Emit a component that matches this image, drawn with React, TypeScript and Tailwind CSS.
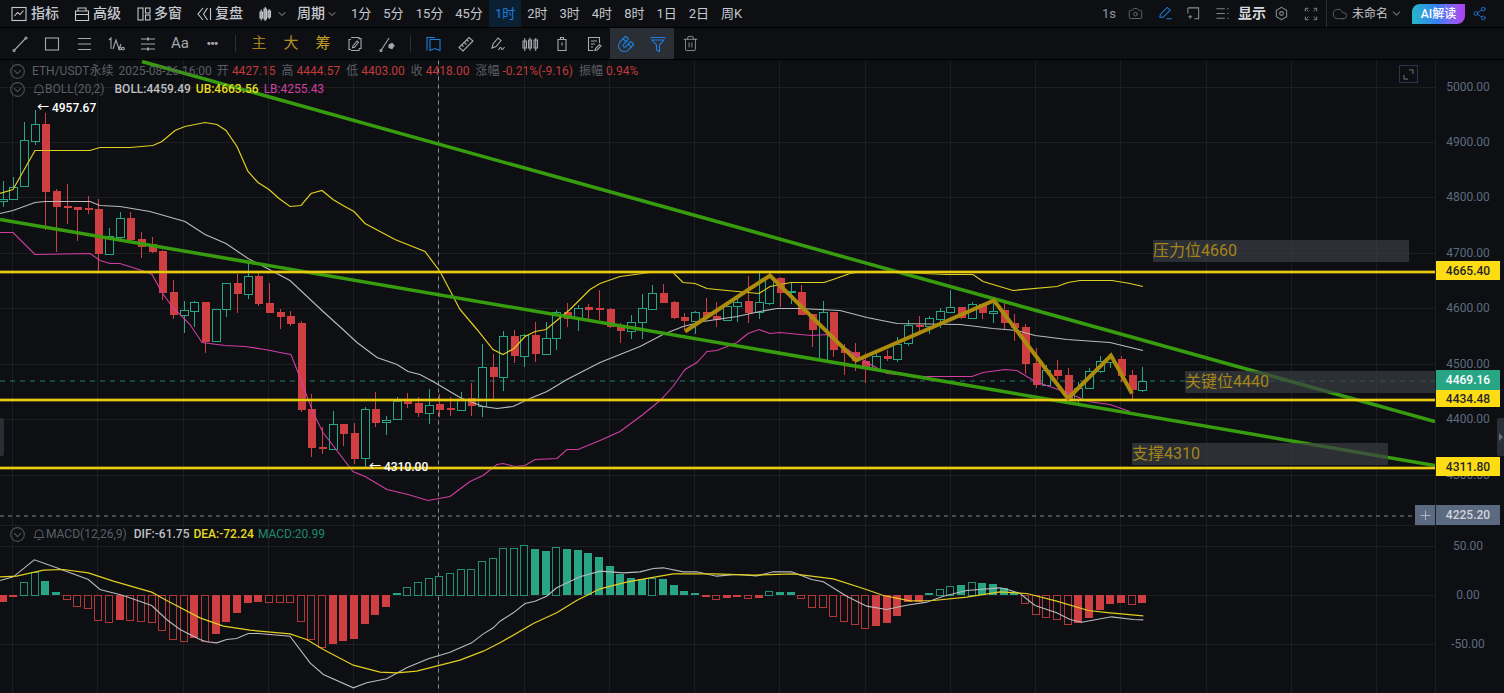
import React from 'react';
import { Camera, ChevronDown, Magnet, Share2, Trash2, Cloud, Plus } from 'lucide-react';

const BG = '#0d0f12';
const GREEN = '#27a585';
const RED = '#cf3e41';

// [high, bodyTop, bodyBottom, low, up]
const candles: [number, number, number, number, 0 | 1][] = [
  [181, 199, 201, 207, 1], [177, 187, 199, 200, 1], [122, 140, 186, 186, 1], [110, 124, 141, 145, 1],
  [113, 124, 192, 230, 0], [189, 191, 207, 252, 0], [184, 206, 208, 224, 0], [207, 207, 210, 241, 0],
  [196, 208, 210, 214, 0], [199, 209, 254, 272, 0], [228, 236, 254, 254, 1], [212, 218, 237, 239, 1],
  [212, 218, 240, 240, 0], [232, 239, 247, 258, 0], [237, 244, 252, 253, 0], [250, 251, 293, 300, 0],
  [280, 292, 315, 319, 0], [301, 310, 315, 333, 1], [301, 302, 311, 327, 1], [302, 302, 342, 353, 0],
  [309, 309, 341, 341, 1], [283, 283, 309, 317, 1], [274, 283, 294, 313, 0], [263, 276, 294, 299, 1],
  [271, 276, 304, 306, 0], [283, 303, 313, 313, 0], [309, 312, 317, 329, 0], [311, 316, 324, 326, 0],
  [321, 323, 410, 412, 0], [394, 409, 448, 457, 0], [427, 447, 449, 454, 0], [411, 424, 449, 449, 1],
  [424, 424, 434, 446, 0], [423, 433, 459, 464, 0], [407, 409, 458, 468, 1], [392, 409, 423, 427, 0],
  [416, 420, 422, 435, 1], [397, 401, 419, 419, 1], [393, 401, 404, 408, 0], [397, 403, 413, 417, 0],
  [389, 405, 413, 424, 1], [394, 404, 410, 417, 0], [397, 408, 410, 416, 0], [392, 399, 410, 410, 1],
  [383, 398, 406, 416, 0], [344, 367, 406, 417, 1], [354, 367, 377, 400, 0], [331, 336, 377, 391, 1],
  [330, 336, 356, 363, 0], [334, 335, 356, 367, 1], [322, 335, 354, 362, 0], [322, 338, 354, 354, 1],
  [310, 312, 338, 350, 1], [303, 312, 319, 327, 0], [305, 308, 318, 331, 1], [304, 307, 310, 320, 0],
  [290, 308, 310, 320, 0], [308, 309, 327, 328, 0], [323, 327, 331, 343, 0], [315, 322, 331, 339, 1],
  [294, 308, 322, 339, 1], [285, 293, 309, 310, 1], [284, 293, 303, 303, 0], [301, 302, 318, 319, 0],
  [313, 317, 321, 330, 0], [311, 312, 321, 334, 1], [298, 312, 317, 317, 0], [302, 316, 320, 327, 0],
  [306, 306, 320, 320, 1], [298, 302, 306, 322, 1], [276, 301, 313, 323, 0], [273, 302, 312, 319, 1],
  [273, 277, 303, 305, 1], [277, 278, 293, 307, 0], [283, 291, 292, 304, 1], [285, 292, 315, 315, 0],
  [314, 314, 330, 347, 0], [301, 312, 360, 360, 1], [312, 312, 350, 357, 0], [344, 349, 353, 375, 0],
  [343, 352, 361, 371, 0], [353, 361, 367, 383, 0], [353, 356, 369, 369, 1], [350, 356, 359, 361, 0],
  [337, 344, 359, 362, 1], [320, 325, 343, 346, 1], [316, 325, 327, 333, 0], [316, 318, 326, 334, 1],
  [308, 311, 319, 328, 1], [290, 307, 312, 312, 1], [307, 307, 318, 319, 0], [302, 304, 318, 319, 1],
  [304, 304, 313, 319, 0], [300, 311, 313, 323, 1], [303, 310, 323, 330, 0], [314, 323, 328, 341, 0],
  [324, 327, 364, 374, 0], [348, 363, 385, 388, 0], [365, 370, 385, 385, 1], [360, 370, 376, 380, 0],
  [368, 375, 399, 402, 0], [382, 388, 399, 403, 1], [368, 371, 388, 389, 1], [356, 361, 371, 373, 1],
  [356, 358, 362, 368, 1], [356, 359, 376, 382, 0], [370, 375, 390, 400, 0], [367, 381, 390, 392, 1],
];

// [height in px, hollow]; positive is up, negative is down
const macdBars: [number, 0 | 1][] = [
  [-7, 0], [-2, 0], [13, 1], [23, 1], [14, 0], [3, 0], [-4, 1], [-11, 1], [-13, 1], [-25, 1], [-27, 1], [-25, 0],
  [-25, 1], [-26, 1], [-27, 1], [-35, 1], [-44, 1], [-46, 1], [-43, 0], [-46, 1], [-39, 0], [-27, 0], [-18, 0], [-8, 0],
  [-7, 0], [-7, 1], [-7, 1], [-7, 1], [-26, 1], [-44, 1], [-52, 1], [-49, 0], [-46, 0], [-44, 0], [-29, 0], [-20, 0],
  [-12, 0], [2, 0], [8, 1], [13, 1], [17, 1], [19, 1], [22, 1], [26, 1], [26, 1], [34, 1], [37, 1], [47, 1],
  [47, 1], [50, 1], [46, 0], [44, 0], [48, 1], [46, 0], [45, 0], [42, 0], [38, 0], [29, 0], [21, 0], [17, 0],
  [16, 0], [17, 1], [16, 0], [10, 0], [4, 0], [2, 0], [-2, 0], [-4, 1], [-3, 0], [-2, 0], [-3, 1], [-3, 0],
  [4, 1], [3, 0], [3, 0], [-3, 1], [-12, 1], [-12, 1], [-21, 1], [-26, 1], [-29, 1], [-33, 1], [-31, 0], [-28, 0],
  [-21, 0], [-7, 0], [-7, 0], [2, 0], [6, 1], [9, 1], [10, 0], [13, 1], [12, 0], [11, 0], [7, 0], [2, 0],
  [-8, 1], [-19, 1], [-22, 1], [-24, 1], [-29, 1], [-28, 0], [-23, 0], [-15, 0], [-9, 0], [-8, 0], [-9, 1], [-8, 0],
];

const ub = '0,194 13,190 35,151 45,151 90,151 100,148 130,148 153,146 162,142 175,131 185,127 205,123 217,125 226,131 237,147 248,172 258,183 269,190 279,199 290,207 301,206 311,194 322,191 333,200 343,206 354,212 365,224 380,232 395,240 425,252 440,272 460,310 477,330 493,350 503,355 514,349 525,337 535,332 546,330 570,310 590,290 600,284 620,277 650,273 672,272 683,283 695,284 707,289 727,291 748,293 759,294 770,287 791,283 813,283 824,283 833,280 850,274 863,272 880,272 947,275 973,275 983,282 1013,291 1057,287 1068,283 1080,281 1112,281 1130,284 1143,287';
const mid = '0,214 13,211 35,203 45,202 90,202 100,206 120,207 150,212 185,222 205,235 226,244 248,259 258,264 290,281 322,311 343,330 357,343 377,358 397,365 408,372 420,375 433,382 460,398 483,407 497,409 513,407 530,399 547,392 567,380 600,363 640,347 663,335 683,327 703,322 737,317 760,312 777,309 800,309 840,311 867,318 897,324 960,325 993,329 1017,331 1035,336 1067,340 1110,343 1143,351';
const lb = '0,233 13,233 35,255 90,254 100,261 110,264 120,264 145,272 152,275 162,293 172,307 190,325 202,343 225,346 245,347 265,350 280,353 291,355 300,378 313,413 323,433 353,472 365,477 387,490 408,495 428,501 450,497 470,482 483,476 497,465 503,464 515,467 525,466 535,460 557,459 567,450 578,450 600,441 620,432 643,415 660,401 673,387 685,370 697,363 707,352 717,351 737,343 748,334 759,330 770,334 780,333 800,335 812,336 827,335 840,345 867,363 887,374 923,377 972,377 983,373 1005,370 1017,371 1035,382 1067,393 1088,402 1110,405 1130,412';

const toPoints = (offset: number, pts: number[][]) => pts.map(([x, y]) => `${offset + x / 3},${520 + y / 3}`).join(' ');

const dif = [
  toPoints(0, [[0, 183], [40, 172], [103, 121], [170, 145], [265, 180], [300, 210], [370, 228], [455, 258], [500, 300], [540, 330], [600, 360], [620, 367], [650, 370], [680, 360], [710, 357], [745, 342], [775, 342], [870, 350], [930, 430], [970, 465], [1060, 505], [1100, 490], [1160, 478], [1220, 445], [1285, 418], [1350, 398], [1415, 370], [1450, 343], [1480, 325]]),
  toPoints(500, [[0, 305], [40, 280], [75, 252], [105, 245], [140, 230], [170, 205], [240, 172], [300, 155], [370, 160], [420, 157], [460, 147], [490, 145], [550, 157], [590, 157], [650, 170], [710, 165], [770, 169], [820, 157], [875, 157], [935, 180], [970, 187], [1040, 230], [1100, 260], [1160, 270], [1220, 257], [1280, 248], [1330, 230], [1400, 213]]),
  toPoints(1000, [[0, 205], [30, 212], [60, 222], [105, 258], [170, 280], [210, 300], [245, 308], [335, 292], [400, 300], [430, 301]]),
].join(' ');
const dea = [
  toPoints(0, [[0, 172], [50, 170], [130, 152], [190, 150], [265, 160], [340, 185], [455, 218], [500, 243], [600, 295], [670, 320], [750, 332], [870, 343], [920, 360], [970, 390], [1060, 437], [1140, 458], [1190, 460], [1250, 455], [1380, 422], [1450, 395]]),
  toPoints(500, [[0, 370], [100, 312], [170, 280], [230, 243], [300, 208], [380, 188], [450, 175], [520, 163], [640, 163], [760, 167], [880, 163], [1000, 178], [1090, 207], [1150, 228], [1230, 244], [1300, 243], [1400, 233]]),
  toPoints(1000, [[0, 217], [80, 222], [170, 245], [265, 273], [330, 280], [430, 289]]),
].join(' ');

const gridX = [12.5, 97.5, 183.5, 268.5, 353.5, 438.5, 524.5, 609.5, 694.5, 779.5, 865.5, 950.5, 1035.5, 1120.5, 1206.5, 1291.5, 1376.5];
const gridY = [87.5, 142.5, 197.5, 253.5, 308.5, 364.5, 419.5, 475.5, 525.5, 546.5, 595.5, 644.5];

const axisLabels: [string, number][] = [
  ['5000.00', 87], ['4900.00', 142], ['4800.00', 197], ['4700.00', 253], ['4600.00', 308], ['4500.00', 364],
  ['4400.00', 419], ['4300.00', 475], ['50.00', 546], ['0.00', 595], ['-50.00', 644],
];

const centerX = (i: number) => 2.6 + i * 10.65;

const Chart = () => (
  <svg className="absolute inset-0 h-full w-full" viewBox="0 61 1435 632" fill="none">
    <g stroke="#1c1e22" shapeRendering="crispEdges">
      {gridX.map((x) => <line key={x} x1={x} x2={x} y1={61} y2={693} />)}
      {gridY.map((y) => <line key={y} x1={0} x2={1435} y1={y} y2={y} />)}
    </g>

    <line x1={0} x2={1435} y1={381.5} y2={381.5} stroke={GREEN} strokeOpacity={0.75} strokeDasharray="5 5" />
    <line x1={438.5} x2={438.5} y1={61} y2={693} stroke="#8a8d92" strokeDasharray="4 4" />
    <line x1={0} x2={1415} y1={516.5} y2={516.5} stroke="#8a8d92" strokeDasharray="4 4" />

    {candles.map(([high, top, bottom, low, up], i) => {
      const cx = Math.round(centerX(i));
      const color = up ? GREEN : RED;
      return (
        <g key={i} shapeRendering="crispEdges">
          <line x1={cx + 0.5} x2={cx + 0.5} y1={high} y2={low} stroke={color} />
          {up ? (
            <rect x={cx - 3.5} y={top + 0.5} width={8} height={bottom - top} fill={BG} stroke={color} />
          ) : (
            <rect x={cx - 3.5} y={top} width={8} height={bottom - top} fill={color} />
          )}
        </g>
      );
    })}

    {macdBars.map(([h, hollow], i) => {
      const x = Math.round(centerX(i)) - 3.5;
      const color = h > 0 ? GREEN : RED;
      const y = h > 0 ? 595 - h : 595;
      return hollow ? (
        <rect key={i} x={x} y={y + 0.5} width={7} height={Math.abs(h)} fill={BG} stroke={color} strokeOpacity={0.85} shapeRendering="crispEdges" />
      ) : (
        <rect key={i} x={x - 0.5} y={y} width={8} height={Math.abs(h)} fill={color} shapeRendering="crispEdges" />
      );
    })}

    <polyline points={ub} stroke="#e3cf1f" strokeWidth={1.2} />
    <polyline points={mid} stroke="#b9bbbe" strokeWidth={1.1} />
    <polyline points={lb} stroke="#d13fa5" strokeWidth={1.1} />
    <polyline points={dif} stroke="#b9bbbe" strokeWidth={1.1} />
    <polyline points={dea} stroke="#e3cf1f" strokeWidth={1.2} />

    <line x1={142} y1={62} x2={1435} y2={422} stroke="#389c0f" strokeWidth={3.5} />
    <line x1={0} y1={220} x2={1435} y2={466} stroke="#389c0f" strokeWidth={3.5} />

    <g stroke="#a8900f" strokeWidth={3}>
      {[272.5, 400.5, 468.5].map((y) => <line key={y} x1={0} x2={1435} y1={y} y2={y} />)}
    </g>
    <g stroke="#ffdf14" strokeWidth={1.6}>
      {[272.5, 400.5, 468.5].map((y) => <line key={y} x1={0} x2={1435} y1={y} y2={y} />)}
    </g>

    <polyline points="685,332 770,276 856,361 994,301 1068,399 1111,356 1132,394" stroke="#ad8b0c" strokeWidth={4} strokeLinejoin="miter" />
  </svg>
);

const Glyph = ({ children, className = 'text-[#a5a9b0]' }: { children: React.ReactNode; className?: string }) => (
  <svg viewBox="0 0 18 18" fill="none" stroke="currentColor" strokeWidth={1.1} className={`h-[18px] w-[18px] ${className}`}>
    {children}
  </svg>
);

const drawTools: React.ReactNode[] = [
  <Glyph key="line"><path d="M3.5 15 14.5 3.5" /><circle cx="3" cy="15.5" r="1" /><circle cx="15" cy="3" r="1" /></Glyph>,
  <Glyph key="rect"><rect x="2.5" y="3" width="13" height="12" /></Glyph>,
  <Glyph key="lines"><path d="M3 3.5h13M3 9h13M3 14.5h13M16 3.5v0" /></Glyph>,
  <Glyph key="fib"><path d="M2 5 4 3v11M6 14l3-9 3 9 2-5" /><circle cx="13" cy="13.5" r="1.3" /><circle cx="16" cy="13.5" r="1.3" /></Glyph>,
  <Glyph key="channel"><path d="M2 4h14M2 9h14M2 14h14" /><path d="M9 2.5v3M9 12.5v3" strokeWidth={1.8} /></Glyph>,
];

const Sep = () => <span className="mx-[7px] h-[17px] w-px bg-[#2c2f35]" />;

const ToolCell = ({ children, active }: { children: React.ReactNode; active?: boolean }) => (
  <div className={`flex h-[32px] w-[32px] items-center justify-center ${active ? 'bg-[#2a2e35]' : ''}`}>{children}</div>
);

const tabs = ['1分', '5分', '15分', '45分', '1时', '2时', '3时', '4时', '8时', '1日', '2日', '周K'];

const TopBar = () => (
  <div className="flex h-[27px] items-center justify-between text-[#c5c8ce]">
    <div className="flex items-center pl-[10px]">
      <div className="flex items-center gap-[3px] text-[14px] font-medium">
        <Glyph className="text-[#c5c8ce]"><rect x="2" y="2.5" width="14" height="13" /><path d="m4.5 11 3-3.5 2.500 2 3.500-4" /></Glyph>
        <span>指标</span>
      </div>
      <div className="ml-[14px] flex items-center gap-[2px] text-[14px] font-medium">
        <Glyph className="text-[#c5c8ce]"><path d="M5 6V3h8v3M2.5 6h13v9.500h-13zM2.5 9.500h13" /></Glyph>
        <span>高级</span>
      </div>
      <div className="ml-[14px] flex items-center gap-[1px] text-[14px] font-medium">
        <Glyph className="text-[#c5c8ce]"><rect x="3" y="3" width="5" height="12" /><rect x="10.5" y="3" width="4.5" height="5" /><rect x="10.5" y="10" width="4.5" height="5" /></Glyph>
        <span>多窗</span>
      </div>
      <div className="ml-[13px] flex items-center gap-[2px] text-[14px] font-medium">
        <Glyph className="text-[#c5c8ce]"><path d="M8 3 3 9l5 6M12.500 3l-4 6 4 6M15.500 3v12" /></Glyph>
        <span>复盘</span>
      </div>
      <div className="ml-[13px] flex items-center gap-[2px]">
        <Glyph className="text-[#c5c8ce]"><path d="M4 7h2.500v6H4zM8 4h2.500v10H8zM12 6h2.500v6H12zM5.200 4.500V15.500M9.200 2v14M13.200 4v10" /></Glyph>
        <ChevronDown className="h-[12px] w-[12px] text-[#9ba0a8]" />
      </div>
      <div className="ml-[9px] flex items-center gap-[1px] text-[14px] font-medium">
        <span>周期</span>
        <ChevronDown className="h-[12px] w-[12px] text-[#9ba0a8]" />
      </div>
      <div className="ml-[7px] flex items-center text-[13px]">
        {tabs.map((t) => (
          <span key={t} className={`flex h-[27px] items-center px-[6px] ${t === '1时' ? 'bg-[#0b2133] text-[#1e7fe0]' : ''}`}>{t}</span>
        ))}
      </div>
    </div>

    <div className="flex items-center">
      <span className="mr-[12px] text-[13px] text-[#8f97a5]">1s</span>
      <Camera className="mr-[15px] h-[15px] w-[15px] text-[#6b6f76]" strokeWidth={1.4} />
      <svg viewBox="0 0 16 16" fill="none" stroke="#1e7fe0" strokeWidth={1.1} className="mr-[13px] h-[15px] w-[15px]">
        <path d="m2 12 .5-3L10 1.500 13 4.500 5.500 12zM9 13.500h5.500" />
      </svg>
      <svg viewBox="0 0 16 16" fill="none" stroke="#8a8d92" strokeWidth={1.1} className="mr-[14px] h-[15px] w-[15px]">
        <path d="M2 2h11.500v11.500H9M2 2v6M2.500 11.500h4M4.500 9.500v4" />
      </svg>
      <svg viewBox="0 0 16 16" fill="none" stroke="#7d8188" strokeWidth={1.1} className="mr-[8px] h-[15px] w-[15px]">
        <path d="M1.500 3h9M1.500 8h9M1.500 13h9M13 3h1.500M13 8h1.500M13 13h1.500" />
      </svg>
      <span className="text-[14px] font-bold text-[#d5d8dd]">显示</span>
      <svg viewBox="0 0 16 16" fill="none" stroke="#8a8d92" strokeWidth={1.1} className="ml-[8px] mr-[15px] h-[15px] w-[15px]">
        <path d="M8 1.500 13.500 4.500v7L8 14.500 2.500 11.500v-7z" /><circle cx="8" cy="8" r="2" />
      </svg>
      <svg viewBox="0 0 16 16" fill="none" stroke="#8a8d92" strokeWidth={1.1} className="mr-[8px] h-[14px] w-[14px]">
        <path d="M1.500 5V1.500H5M11 1.500h3.500V5M14.500 11v3.500H11M5 14.500H1.500V11M5 5 3 3M11 5l2-2M11 11l2 2M5 11l-2 2" />
      </svg>
      <span className="h-[27px] w-px bg-[#2c2f35]" />
      <Cloud className="ml-[5px] h-[16px] w-[16px] text-[#6b6f76]" strokeWidth={1.2} />
      <span className="ml-[4px] text-[12px] text-[#c5c8ce]">未命名</span>
      <ChevronDown className="ml-[2px] h-[13px] w-[13px] text-[#6b6f76]" />
      <span className="ml-[9px] flex h-[20px] w-[53px] items-center justify-center rounded-tl-[8px] rounded-br-[8px] bg-gradient-to-r from-[#26b4c8] via-[#3a7cf0] to-[#b03cf0] text-[12px] font-medium text-white">AI解读</span>
      <Share2 className="ml-[7px] mr-[17px] h-[15px] w-[15px] text-[#1e7fe0]" strokeWidth={1.3} />
    </div>
  </div>
);

const ToolBar = () => (
  <div className="flex h-[32px] items-center border-t border-black pl-[4px]">
    {drawTools.map((icon, i) => <ToolCell key={i}>{icon}</ToolCell>)}
    <ToolCell><span className="text-[15px] text-[#a5a9b0]">Aa</span></ToolCell>
    <ToolCell><span className="text-[13px] font-bold leading-none tracking-[-1px] text-[#a5a9b0]">•••</span></ToolCell>
    <Sep />
    <ToolCell><span className="text-[15px] text-[#a97f1c]">主</span></ToolCell>
    <ToolCell><span className="text-[15px] text-[#b59122]">大</span></ToolCell>
    <ToolCell><span className="text-[15px] text-[#c7a02a]">筹</span></ToolCell>
    <ToolCell>
      <Glyph><path d="M5 4.500H3v10h2M13 3.500h2v10h-2M5 2.500h8v2M5 15.500h8v-2M7 11l4-5 1.500 1.300-4 5-2 .5z" /></Glyph>
    </ToolCell>
    <ToolCell>
      <Glyph><path d="M3 15.500 11 3" /><circle cx="3" cy="15.500" r="1" /><path d="m11 10 3-1.500 2 2-2 3-3-1z" fill="currentColor" /></Glyph>
    </ToolCell>
    <Sep />
    <ToolCell>
      <Glyph className="text-[#1e7fe0]"><path d="M2 15.500V2.500h8M5 4.500h10v11l-5-2-5 2z" /></Glyph>
    </ToolCell>
    <ToolCell>
      <Glyph><path d="m2 12.500 10-10 4 3.500-10 10zM5 10l1.500 1.500M7.500 7.500l2 2M10 5l1.500 1.500" /></Glyph>
    </ToolCell>
    <ToolCell>
      <Glyph><path d="m3 13 1-4 5-6 3 2.500-5 6zM9.500 15c1.500-3 2.500-3 3-1.500s1.500 1 3-1.500" /></Glyph>
    </ToolCell>
    <ToolCell>
      <Glyph><path d="M2 6h3.500v7H2zM7.500 5h3v8h-3zM13 5h3.500v8H13zM3.700 3v13M9 2.500v13M14.700 3v13" /></Glyph>
    </ToolCell>
    <ToolCell>
      <Glyph><path d="M5 4.500h8v11H5zM7.500 4.500V2.500h3v2M9 7.500v3" /></Glyph>
    </ToolCell>
    <ToolCell>
      <Glyph><path d="M14.500 8V2.500h-11v13h5M6 6h6M6 9h4M6 12h2M10 15.500l.5-2 4-4 1.500 1.500-4 4z" /></Glyph>
    </ToolCell>
    <ToolCell active><Magnet className="h-[18px] w-[18px] rotate-180 text-[#1e7fe0]" strokeWidth={1.5} /></ToolCell>
    <ToolCell active>
      <Glyph className="text-[#1e7fe0]"><path d="M1.500 2.500h15M3 5h12L10.500 10v6.500l-3-1.500v-5z" /></Glyph>
    </ToolCell>
    <ToolCell><Trash2 className="h-[17px] w-[17px] text-[#a5a9b0]" strokeWidth={1.1} /></ToolCell>
  </div>
);

const CollapseDot = () => (
  <svg viewBox="0 0 14 14" fill="none" stroke="#4d5057" strokeWidth={1} className="h-[15px] w-[15px]">
    <circle cx="7" cy="7" r="6.400" /><path d="m3.800 5.800 3.200 3.200 3.200-3.200" />
  </svg>
);

const Bell = () => (
  <svg viewBox="0 0 12 13" fill="none" stroke="#5b5f66" strokeWidth={1} className="h-[13px] w-[12px]">
    <path d="M1 9.500c1-1 1.300-2 1.300-4a3.700 3.700 0 0 1 7.400 0c0 2 .3 3 1.300 4zM4.500 11.500h3" />
  </svg>
);

const Legend = () => (
  <div className="absolute left-[10px] top-[2px] text-[12px] text-[#5b5f66]">
    <div className="flex h-[18px] items-center gap-[5px]">
      <CollapseDot />
      <span className="ml-[2px]">ETH/USDT永续</span>
      <span>2025-08-26 16:00</span>
      <span>开</span><span className="-ml-[2px] text-[#c23a3c]">4427.15</span>
      <span className="ml-[1px]">高</span><span className="-ml-[2px] text-[#c23a3c]">4444.57</span>
      <span className="ml-[1px]">低</span><span className="-ml-[2px] text-[#c23a3c]">4403.00</span>
      <span className="ml-[1px]">收</span><span className="-ml-[2px] text-[#c23a3c]">4418.00</span>
      <span className="ml-[1px]">涨幅</span><span className="-ml-[2px] text-[#c23a3c]">-0.21%(-9.16)</span>
      <span className="ml-[1px]">振幅</span><span className="-ml-[2px] text-[#c23a3c]">0.94%</span>
    </div>
    <div className="flex h-[18px] items-center">
      <CollapseDot />
      <span className="ml-[8px]"><Bell /></span>
      <span>BOLL(20,2)</span>
      <span className="ml-[10px] font-medium text-[#bfc1c5]">BOLL:4459.49</span>
      <span className="ml-[5px] font-medium text-[#e8dc1e]">UB:4663.56</span>
      <span className="ml-[5px] text-[#d13fa5]">LB:4255.43</span>
    </div>
  </div>
);

const MacdLegend = () => (
  <div className="absolute left-[10px] top-[465px] flex h-[18px] items-center text-[12px] text-[#5b5f66]">
    <CollapseDot />
    <span className="ml-[8px]"><Bell /></span>
    <span className="ml-[1px]">MACD(12,26,9)</span>
    <span className="ml-[7px] font-medium text-[#bfc1c5]">DIF:-61.75</span>
    <span className="ml-[4px] font-medium text-[#e8dc1e]">DEA:-72.24</span>
    <span className="ml-[4px] text-[#1f8a70]">MACD:20.99</span>
  </div>
);

const Note = ({ text, className }: { text: string; className: string }) => (
  <div className={`absolute flex h-[22px] items-center bg-[#3a3e44]/70 text-[16px] leading-none text-[#a5851a] ${className}`}>{text}</div>
);

const PriceTag = ({ text, className }: { text: string; className: string }) => (
  <div className={`absolute left-0 flex w-[64px] items-center justify-center text-[12px] font-medium ${className}`}>{text}</div>
);

export default function App() {
  return (
    <div className="flex h-screen w-full flex-col overflow-hidden bg-[#0d0f12] font-['Roboto','Noto_Sans_CJK_SC',sans-serif]">
      <TopBar />
      <ToolBar />
      <div className="flex min-h-0 flex-1 border-t border-black">
        <div className="relative min-w-0 flex-1">
          <Chart />
          <Legend />
          <MacdLegend />

          <div className="absolute left-[1399px] top-[5px] flex h-[18px] w-[19px] items-center justify-center border border-[#2b3350]">
            <svg viewBox="0 0 12 12" fill="none" stroke="#7a7f88" strokeWidth={1} className="h-[11px] w-[11px]">
              <path d="M6.500 1H11v4.500M1 6.500V11h4.500" />
            </svg>
          </div>

          <Note text="压力位4660" className="left-[1153px] top-[180px] w-[256px]" />
          <Note text="关键位4440" className="left-[1185px] top-[311px] w-[250px]" />
          <Note text="支撑4310" className="left-[1132px] top-[383px] w-[256px]" />

          <span className="absolute left-[37px] top-[42px] text-[12px] font-medium leading-none text-white">← 4957.67</span>
          <span className="absolute left-[369px] top-[401px] text-[12px] font-medium leading-none text-white">← 4310.00</span>

          <div className="absolute left-[1415px] top-[445px] flex h-[20px] w-[20px] items-center justify-center bg-[#5b6a80]">
            <Plus className="h-[15px] w-[15px] text-[#b5bbc5]" strokeWidth={1.5} />
          </div>
          <div className="absolute left-0 top-[358px] h-[38px] w-[4px] rounded-r-[2px] bg-[#2a2e35]" />
        </div>

        <div className="relative w-[69px] shrink-0 border-l border-[#1c1e22] text-[12px] text-[#5f6b80]">
          {axisLabels.map(([text, y]) => (
            <span
              key={text}
              className="absolute flex w-[64px] items-center justify-center"
              style={{ top: y - 60 - 8, height: 16 }}
            >
              {text}
            </span>
          ))}
          <PriceTag text="4665.40" className="top-[201px] h-[19px] bg-[#fddc14] text-[#26262a]" />
          <PriceTag text="4469.16" className="top-[310px] h-[20px] bg-[#27a585] font-bold text-white" />
          <PriceTag text="4434.48" className="top-[330px] h-[17px] bg-[#fddc14] text-[#26262a]" />
          <PriceTag text="4311.80" className="top-[397px] h-[19px] bg-[#fddc14] text-[#26262a]" />
          <PriceTag text="4225.20" className="top-[445px] h-[20px] bg-[#5b6a80] text-[#d0d4da]" />
          <div className="absolute right-0 top-[358px] flex h-[38px] w-[7px] items-center justify-center rounded-l-[2px] bg-[#2a2e35]">
            <span className="h-0 w-0 border-y-[4px] border-l-[4px] border-y-transparent border-l-[#6b6f76]" />
          </div>
        </div>
      </div>
    </div>
  );
}
